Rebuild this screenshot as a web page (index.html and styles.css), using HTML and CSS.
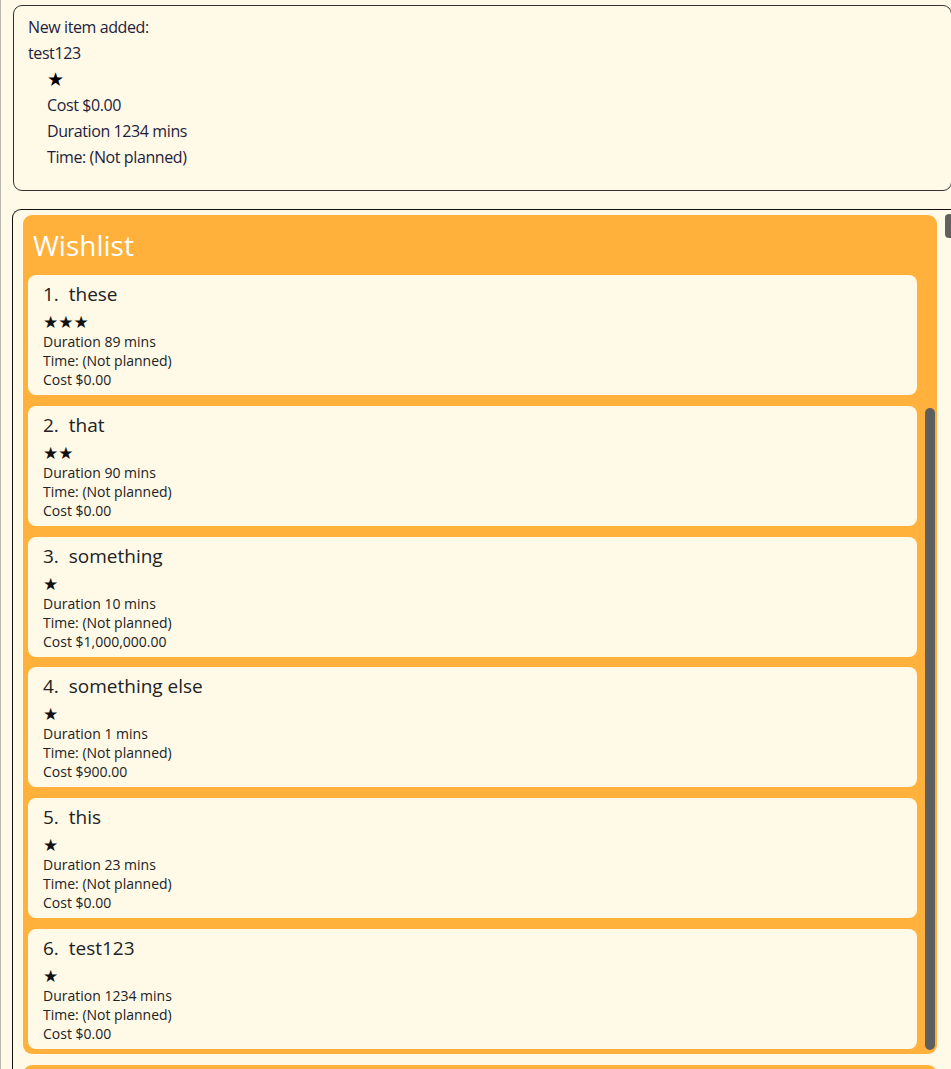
FILE: index.html
```html
<!DOCTYPE html>
<html>
<head>
<meta charset="utf-8">
<link rel="stylesheet" href="styles.css">
</head>
<body>
<div class="page">
  <div class="result">
    <div class="r-line">New item added:</div>
    <div class="r-line">test123</div>
    <div class="r-line indent star">★</div>
    <div class="r-line indent">Cost $0.00</div>
    <div class="r-line indent">Duration 1234 mins</div>
    <div class="r-line indent">Time: (Not planned)</div>
  </div>
  <div class="listbox">
    <div class="panel">
      <div class="panel-title">Wishlist</div>
      <div class="cards">
        <div class="card">
          <div class="card-title">1.&nbsp; these</div>
          <div class="stars">★★★</div>
          <div class="detail">Duration 89 mins</div>
          <div class="detail">Time: (Not planned)</div>
          <div class="detail">Cost $0.00</div>
        </div>
        <div class="card">
          <div class="card-title">2.&nbsp; that</div>
          <div class="stars">★★</div>
          <div class="detail">Duration 90 mins</div>
          <div class="detail">Time: (Not planned)</div>
          <div class="detail">Cost $0.00</div>
        </div>
        <div class="card">
          <div class="card-title">3.&nbsp; something</div>
          <div class="stars">★</div>
          <div class="detail">Duration 10 mins</div>
          <div class="detail">Time: (Not planned)</div>
          <div class="detail">Cost $1,000,000.00</div>
        </div>
        <div class="card">
          <div class="card-title">4.&nbsp; something else</div>
          <div class="stars">★</div>
          <div class="detail">Duration 1 mins</div>
          <div class="detail">Time: (Not planned)</div>
          <div class="detail">Cost $900.00</div>
        </div>
        <div class="card">
          <div class="card-title">5.&nbsp; this</div>
          <div class="stars">★</div>
          <div class="detail">Duration 23 mins</div>
          <div class="detail">Time: (Not planned)</div>
          <div class="detail">Cost $0.00</div>
        </div>
        <div class="card">
          <div class="card-title">6.&nbsp; test123</div>
          <div class="stars">★</div>
          <div class="detail">Duration 1234 mins</div>
          <div class="detail">Time: (Not planned)</div>
          <div class="detail">Cost $0.00</div>
        </div>
      </div>
      <div class="inner-thumb"></div>
    </div>
    <div class="panel panel-next"></div>
  </div>
  <div class="outer-thumb"></div>
</div>
</body>
</html>
```

FILE: styles.css
```css
html, body {
  margin: 0;
  padding: 0;
  height: 100%;
  overflow: hidden;
  background: #fff9e8;
}
body {
  font-family: "Open Sans", "Noto Sans", sans-serif;
  color: #222;
}
.page {
  position: relative;
  height: 1069px;
  border-left: 1px solid #b8b8b0;
  box-sizing: border-box;
  padding-top: 5px;
}
.result {
  margin-left: 12px;
  width: 939px;
  height: 186px;
  box-sizing: border-box;
  border: 1px solid #333;
  border-radius: 9px;
  padding: 8px 0 0 14px;
}
.r-line {
  font-size: 16px;
  line-height: 26px;
  font-weight: 400;
  letter-spacing: -0.4px;
  color: #1e1e3a;
}
.r-line.indent {
  padding-left: 19px;
}
.r-line.star {
  font-size: 19px;
  font-family: "DejaVu Sans", sans-serif;
  color: #000;
  letter-spacing: 0;
}
.listbox {
  margin-top: 18px;
  margin-left: 11px;
  width: 960px;
  height: 900px;
  box-sizing: border-box;
  border: 1px solid #111;
  border-right: none;
  border-bottom: none;
  border-top-left-radius: 9px;
  padding: 5px 0 0 10px;
}
.panel {
  position: relative;
  width: 914px;
  background: #ffb13b;
  border-radius: 9px;
  padding: 0 20px 5px 5px;
  box-sizing: border-box;
}
.panel-title {
  height: 60px;
  padding-left: 5px;
  color: #fff;
  font-size: 28px;
  line-height: 60px;
}
.cards {
  display: flex;
  flex-direction: column;
  gap: 10.8px;
}
.card {
  height: 120px;
  box-sizing: border-box;
  background: #fff9e8;
  border-radius: 8px;
  padding: 6px 0 0 15px;
}
.card-title {
  font-size: 19px;
  line-height: 26px;
  color: #222;
}
.stars {
  font-family: "DejaVu Sans", sans-serif;
  font-size: 17px;
  line-height: 19px;
  height: 19px;
  margin-top: 6px;
  color: #111;
}
.detail {
  font-size: 14px;
  line-height: 19px;
  color: #222;
}
.inner-thumb {
  position: absolute;
  left: 902px;
  top: 193px;
  width: 10px;
  height: 642px;
  background: #5f5f5f;
  border-radius: 5px;
}
.panel-next {
  margin-top: 11px;
  height: 40px;
}
.outer-thumb {
  position: absolute;
  left: 944px;
  top: 214px;
  width: 10px;
  height: 24px;
  background: #606060;
  border-radius: 4px;
}
```
